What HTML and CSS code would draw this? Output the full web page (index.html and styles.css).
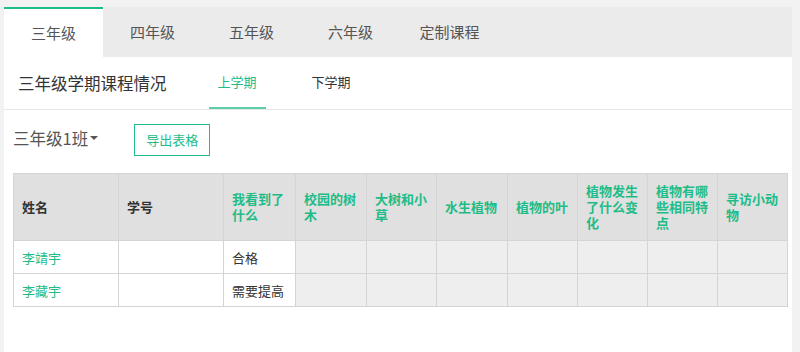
FILE: index.html
```html
<!DOCTYPE html>
<html lang="zh-CN">
<head>
    <meta charset="UTF-8">
    <meta name="viewport" content="width=device-width, initial-scale=1.0">
    <title>三年级学期课程情况</title>
    <link rel="stylesheet" href="styles.css">
</head>
<body>
    <div class="panel">
        <div class="grade-tabs">
            <div class="grade-tab active">三年级</div>
            <div class="grade-tab">四年级</div>
            <div class="grade-tab">五年级</div>
            <div class="grade-tab">六年级</div>
            <div class="grade-tab">定制课程</div>
        </div>

        <div class="term-bar">
            <h2 class="term-title">三年级学期课程情况</h2>
            <div class="term-tab active">上学期</div>
            <div class="term-tab">下学期</div>
        </div>

        <div class="class-row">
            <div class="class-select">三年级1班<span class="caret"></span></div>
            <a href="#" class="export-btn">导出表格</a>
        </div>

        <table class="score-table">
            <colgroup>
                <col style="width: 105px">
                <col style="width: 105px">
                <col style="width: 72px">
                <col style="width: 71px">
                <col style="width: 70px">
                <col style="width: 71px">
                <col style="width: 70px">
                <col style="width: 70px">
                <col style="width: 70px">
                <col style="width: 70px">
            </colgroup>
            <thead>
                <tr>
                    <th>姓名</th>
                    <th>学号</th>
                    <th class="course">我看到了什么</th>
                    <th class="course">校园的树木</th>
                    <th class="course">大树和小草</th>
                    <th class="course">水生植物</th>
                    <th class="course">植物的叶</th>
                    <th class="course">植物发生了什么变化</th>
                    <th class="course">植物有哪些相同特点</th>
                    <th class="course">寻访小动物</th>
                </tr>
            </thead>
            <tbody>
                <tr>
                    <td class="name">李靖宇</td>
                    <td></td>
                    <td>合格</td>
                    <td class="off"></td>
                    <td class="off"></td>
                    <td class="off"></td>
                    <td class="off"></td>
                    <td class="off"></td>
                    <td class="off"></td>
                    <td class="off"></td>
                </tr>
                <tr>
                    <td class="name">李藏宇</td>
                    <td></td>
                    <td>需要提高</td>
                    <td class="off"></td>
                    <td class="off"></td>
                    <td class="off"></td>
                    <td class="off"></td>
                    <td class="off"></td>
                    <td class="off"></td>
                    <td class="off"></td>
                </tr>
            </tbody>
        </table>
    </div>
</body>
</html>
```

FILE: styles.css
```css
* {
    margin: 0;
    padding: 0;
    box-sizing: border-box;
}

body {
    font-family: "Noto Sans CJK SC", "Noto Sans", sans-serif;
    background: #f2f2f2;
    padding: 7px 8px 0 4px;
    color: #333;
}

.panel {
    background: #fff;
    min-height: 345px;
}

.grade-tabs {
    display: flex;
    height: 50px;
    background: #ebebeb;
}

.grade-tab {
    width: 99px;
    text-align: center;
    line-height: 50px;
    font-size: 15px;
    color: #555;
}

.grade-tab.active {
    background: #fff;
    border-top: 2px solid #1ebc87;
    line-height: 48px;
}

.term-bar {
    display: flex;
    height: 53px;
    padding-left: 14px;
    border-bottom: 1px solid #e6e6e6;
}

.term-title {
    font-size: 16.5px;
    font-weight: normal;
    color: #333;
    line-height: 52px;
    margin-right: 42px;
}

.term-tab {
    width: 57px;
    text-align: center;
    font-size: 13px;
    color: #333;
    line-height: 50px;
    border-bottom: 2px solid transparent;
    margin-right: 37px;
}

.term-tab.active {
    color: #1ebc87;
    border-bottom-color: #5ccfa6;
}

.class-row {
    display: flex;
    align-items: center;
    padding: 14px 9px 17px;
}

.class-select {
    font-size: 16.5px;
    color: #555;
    display: flex;
    align-items: center;
    margin-top: -4px;
}

.caret {
    display: inline-block;
    margin-left: 2px;
    border-top: 4px solid #555;
    border-left: 4px solid transparent;
    border-right: 4px solid transparent;
}

.export-btn {
    display: inline-block;
    margin-left: 36px;
    height: 32px;
    line-height: 30px;
    padding: 0 11px;
    border: 1px solid #1ebc87;
    color: #1ebc87;
    font-size: 13px;
    text-decoration: none;
}

.score-table {
    margin-left: 9px;
    width: 774px;
    table-layout: fixed;
    border-collapse: collapse;
    font-size: 13px;
}

.score-table th,
.score-table td {
    border: 1px solid #d4d4d4;
    text-align: left;
    padding: 0 8px 0 8px;
}

.score-table th {
    height: 67px;
    background: #e0e0e0;
    font-weight: bold;
    line-height: 16px;
    color: #333;
}

.score-table th.course {
    color: #1ebc87;
}

.score-table td {
    height: 33px;
    color: #333;
}

.score-table td.name {
    color: #1ebc87;
}

.score-table td.off {
    background: #eeeeee;
}
```
